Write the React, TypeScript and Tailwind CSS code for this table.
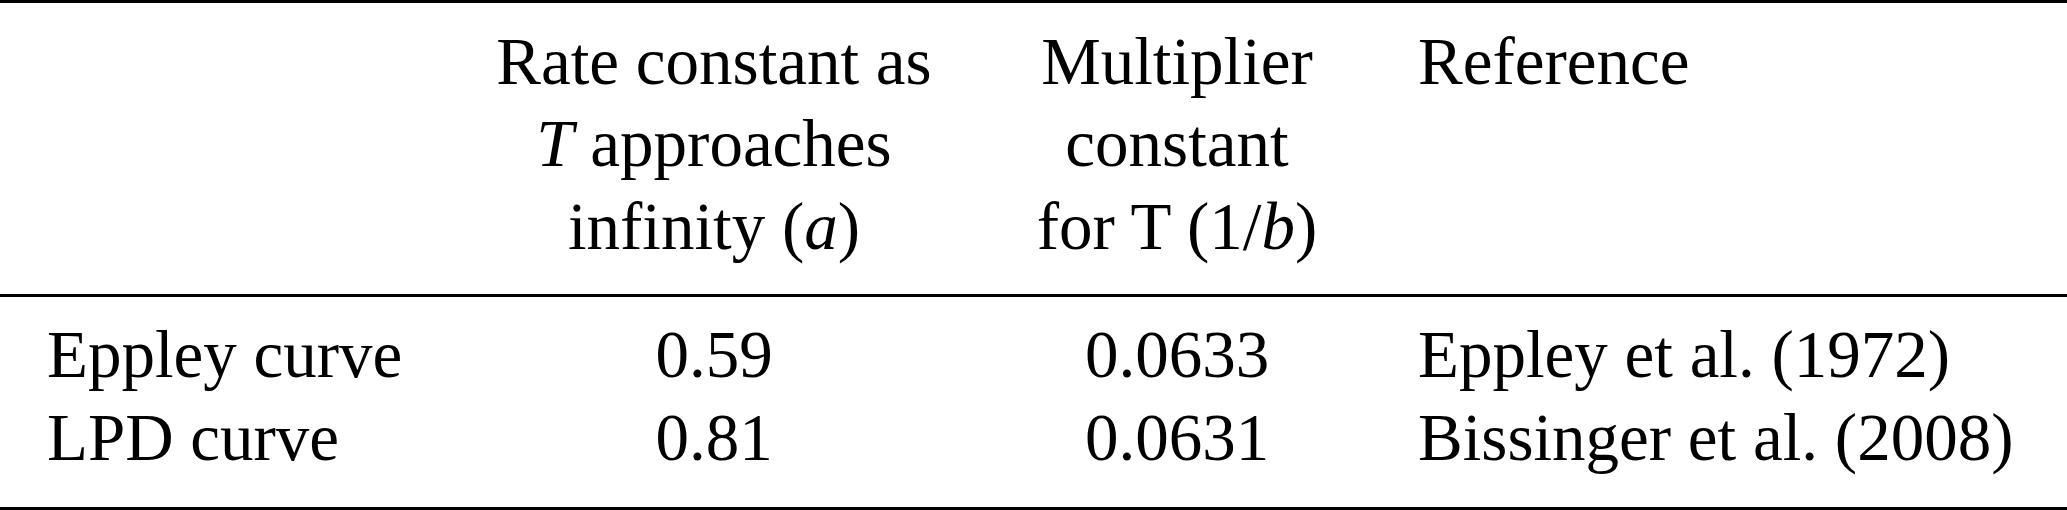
const cols = "grid grid-cols-[448px_532px_394px_1fr]";

const rows = [
  { name: "Eppley curve", a: "0.59", b: "0.0633", ref: "Eppley et al. (1972)" },
  { name: "LPD curve", a: "0.81", b: "0.0631", ref: "Bissinger et al. (2008)" },
];

export default function App() {
  return (
    <div className="w-[2067px] h-[510px] bg-white text-black font-['Liberation_Serif',serif] text-[67px]">
      {/* Header */}
      <div className={`${cols} border-t-[3px] border-b-[3px] border-black pt-[16.5px] pb-[27px] leading-[82.5px]`}>
        <div />
        <div className="text-center">
          <div>Rate constant as</div>
          <div>
            <i>T</i> approaches
          </div>
          <div>
            infinity (<i>a</i>)
          </div>
        </div>
        <div className="text-center">
          <div>Multiplier</div>
          <div>constant</div>
          <div>
            for T (1/<i>b</i>)
          </div>
        </div>
        <div className="pl-[44px]">Reference</div>
      </div>

      {/* Body */}
      <div className="border-b-[3px] border-black pt-[16px] pb-[27px] leading-[83.4px]">
        {rows.map((r) => (
          <div key={r.name} className={cols}>
            <div className="pl-[47px]">{r.name}</div>
            <div className="text-center">{r.a}</div>
            <div className="text-center">{r.b}</div>
            <div className="pl-[44px] whitespace-nowrap">{r.ref}</div>
          </div>
        ))}
      </div>
    </div>
  );
}
